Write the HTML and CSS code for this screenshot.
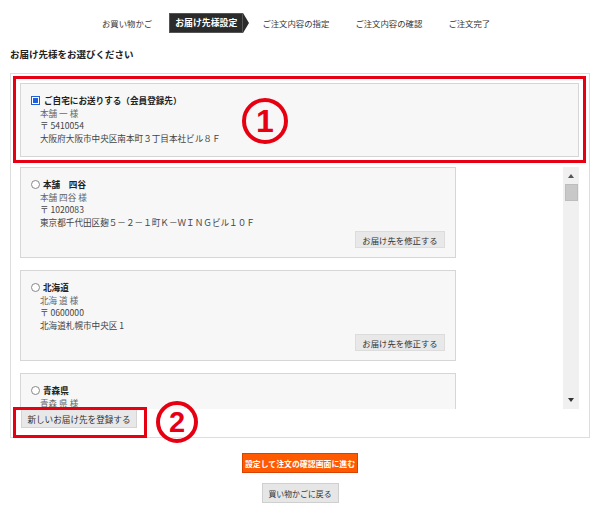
FILE: index.html
```html
<!DOCTYPE html>
<html lang="ja">
<head>
  <meta charset="UTF-8">
  <meta name="viewport" content="width=device-width, initial-scale=1.0">
  <title>お届け先様設定</title>
  <link rel="stylesheet" href="styles.css">
</head>
<body>

  <div class="steps">
    <span class="step">お買い物かご</span>
    <span class="step step-active">お届け先様設定</span>
    <span class="step">ご注文内容の指定</span>
    <span class="step">ご注文内容の確認</span>
    <span class="step">ご注文完了</span>
  </div>

  <h2 class="title">お届け先様をお選びください</h2>

  <div class="address-box">
    <div class="card card-home">
      <div class="card-head"><span class="check"></span>ご自宅にお送りする（会員登録先）</div>
      <div class="card-body">
        <p class="name">本舗 一 様</p>
        <p>〒 5410054</p>
        <p>大阪府大阪市中央区南本町３丁目本社ビル８Ｆ</p>
      </div>
    </div>

    <div class="scroll-row">
      <div class="address-list">
        <div class="card">
          <div class="card-head"><span class="radio"></span>本舗　四谷</div>
          <div class="card-body">
            <p class="name">本舗 四谷 様</p>
            <p>〒 1020083</p>
            <p>東京都千代田区麹５－２－１町Ｋ－ＷＩＮＧビル１０Ｆ</p>
          </div>
          <div class="card-foot"><button class="btn btn-edit">お届け先を修正する</button></div>
        </div>
        <div class="card">
          <div class="card-head"><span class="radio"></span>北海道</div>
          <div class="card-body">
            <p class="name">北海 道 様</p>
            <p>〒 0600000</p>
            <p>北海道札幌市中央区 1</p>
          </div>
          <div class="card-foot"><button class="btn btn-edit">お届け先を修正する</button></div>
        </div>
        <div class="card card-cut">
          <div class="card-head"><span class="radio"></span>青森県</div>
          <div class="card-body">
            <p class="name">青森 県 様</p>
          </div>
        </div>
      </div>
      <div class="scrollbar">
        <span class="arrow arrow-up"></span>
        <span class="thumb"></span>
        <span class="arrow arrow-down"></span>
      </div>
    </div>

    <button class="btn btn-new">新しいお届け先を登録する</button>

    <!-- 注記 -->
    <div class="mark mark-1"></div>
    <div class="mark mark-2"></div>
    <span class="num num-1">1</span>
    <span class="num num-2">2</span>
  </div>

  <div class="actions">
    <button class="btn btn-next">設定して注文の確認画面に進む</button>
    <button class="btn btn-back">買い物かごに戻る</button>
  </div>

</body>
</html>
```

FILE: styles.css
```css
body {
  margin: 0;
  font-family: "Noto Sans CJK JP", "Liberation Sans", sans-serif;
  color: #333;
  background-color: #fff;
}

p {
  margin: 0;
}

/* ステップ */
.steps {
  display: flex;
  align-items: center;
  height: 20px;
  padding: 13px 0 0 89px;
}

.step {
  padding: 0 13px;
  font-size: 8.4px;
  line-height: 20px;
  color: #333;
}

.step-active {
  position: relative;
  margin: 0 6px 0 4px;
  padding: 0 6px;
  background-color: #2b2b2b;
  color: #fff;
  font-weight: bold;
  font-size: 8.9px;
  box-shadow: 0 0 0 1px #555 inset;
}

.step-active::after {
  content: "";
  position: absolute;
  top: 0;
  right: -6px;
  border-style: solid;
  border-width: 10px 0 10px 6px;
  border-color: transparent transparent transparent #2b2b2b;
}

.title {
  margin: 14px 0 12px 10px;
  font-size: 9.5px;
  line-height: 14px;
  color: #222;
}

/* お届け先 */
.address-box {
  position: relative;
  margin: 0 10px;
  padding: 9px 10px 9px 9px;
  border: 1px solid #ddd;
}

.card {
  background-color: #f7f7f7;
  border: 1px solid #d6d6d6;
  padding: 10px 10px 9px;
  font-size: 8.6px;
}

.card-home {
  padding-bottom: 12px;
}

.card-head {
  display: flex;
  align-items: center;
  line-height: 12.5px;
  font-weight: bold;
  color: #222;
}

.check {
  width: 7px;
  height: 7px;
  margin-right: 4px;
  border: 1px solid #2160d8;
  background-color: #1f5fe0;
  box-shadow: inset 0 0 0 1px #fff;
}

.radio {
  width: 7px;
  height: 7px;
  margin-right: 3px;
  border: 1px solid #888;
  border-radius: 50%;
  background-color: #fff;
}

.card-body {
  padding-left: 9px;
  line-height: 12.5px;
  color: #444;
}

.card-body .name {
  color: #666;
}

.card-foot {
  display: flex;
  justify-content: flex-end;
  margin-top: 3px;
}

.scroll-row {
  display: flex;
  justify-content: space-between;
  height: 242px;
  margin-top: 10px;
}

.address-list {
  width: 436px;
  overflow: hidden;
}

.address-list .card {
  margin-bottom: 12px;
}

.address-list .card-cut {
  height: 60px;
  margin-bottom: 0;
}

.scrollbar {
  display: flex;
  flex-direction: column;
  align-items: center;
  width: 16px;
  background-color: #f0f0f0;
}

.arrow {
  border-style: solid;
  border-color: transparent;
}

.arrow-up {
  margin-top: 7px;
  border-width: 0 3.5px 4px;
  border-bottom-color: #555;
}

.arrow-down {
  margin-top: auto;
  margin-bottom: 7px;
  border-width: 4px 3.5px 0;
  border-top-color: #333;
}

.thumb {
  width: 11px;
  height: 15px;
  margin-top: 6px;
  background-color: #c8c8c8;
  border: 1px solid #bdbdbd;
}

/* ボタン */
.btn {
  font-family: inherit;
  cursor: pointer;
  padding: 0;
}

.btn-edit {
  width: 90px;
  height: 17px;
  font-size: 8.4px;
  color: #333;
  background-color: #e8e8e8;
  border: 1px solid #dcdcdc;
}

.btn-new {
  display: block;
  width: 116px;
  height: 19px;
  margin-left: 1px;
  font-size: 8.6px;
  color: #333;
  background-color: #e8e8e8;
  border: 1px solid #d4d4d4;
}

.actions {
  display: flex;
  flex-direction: column;
  align-items: center;
  gap: 10px;
  margin-top: 15px;
}

.btn-next {
  width: 116px;
  height: 20px;
  font-size: 7.9px;
  font-weight: bold;
  color: #fff;
  background-color: #ff5a00;
  border: 1px solid #d84400;
}

.btn-back {
  width: 77px;
  height: 20px;
  font-size: 7.9px;
  color: #333;
  background-color: #e6e6e6;
  border: 1px solid #cfcfcf;
}

/* 注記（赤枠・番号） */
.mark {
  position: absolute;
  box-sizing: border-box;
  border: 3px solid #e60012;
}

.mark-1 {
  left: 2px;
  top: 2px;
  width: 573px;
  height: 87px;
}

.mark-2 {
  left: 2px;
  top: 333px;
  width: 134px;
  height: 31px;
}

.num {
  position: absolute;
  box-sizing: border-box;
  display: flex;
  justify-content: center;
  align-items: center;
  border: 4px solid #e60012;
  border-radius: 50%;
  color: #e60012;
  font-family: "Liberation Sans", sans-serif;
  font-weight: bold;
}

.num-1 {
  left: 231px;
  top: 24px;
  width: 46px;
  height: 46px;
  font-size: 32px;
}

.num-2 {
  left: 145px;
  top: 327px;
  width: 42px;
  height: 42px;
  font-size: 29px;
}
```
